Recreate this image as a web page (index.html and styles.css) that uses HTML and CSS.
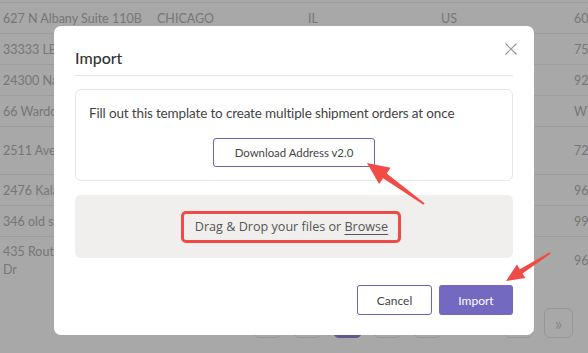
FILE: index.html
```html
<!DOCTYPE html>
<html lang="en">
<head>
  <meta charset="UTF-8" />
  <meta name="viewport" content="width=device-width, initial-scale=1.0" />
  <title>Import</title>
  <link rel="stylesheet" href="styles.css">
</head>
<body>
  <div class="table">
    <div class="row"><span>627 N Albany Suite 110B</span><span>CHICAGO</span><span>IL</span><span>US</span><span>60</span></div>
    <div class="row"><span>33333 LBJ Fwy</span><span>DALLAS</span><span>TX</span><span>US</span><span>75</span></div>
    <div class="row"><span>24300 Nandina Ave</span><span>MORENO VALLEY</span><span>CA</span><span>US</span><span>92</span></div>
    <div class="row"><span>66 Wardour Street</span><span>LONDON</span><span>LND</span><span>GB</span><span>WT</span></div>
    <div class="row tall"><span>2511 Avenida</span><span>FORT WORTH</span><span>TX</span><span>US</span><span>72</span></div>
    <div class="row"><span>2476 Kalama Rd</span><span>KENT</span><span>WA</span><span>US</span><span>96</span></div>
    <div class="row"><span>346 old street</span><span>RENO</span><span>NV</span><span>US</span><span>99</span></div>
    <div class="row tall"><span>435 Route 17 Lake<br>Dr</span><span>HONOLULU</span><span>HI</span><span>US</span><span>96</span></div>
    <div class="pager">
      <span class="pg"></span><span class="pg"></span><span class="pg active"></span><span class="pg"></span><span class="pg"></span>
      <span class="pg gap"></span><span class="pg"></span><span class="pg">&raquo;</span>
    </div>
  </div>

  <div class="overlay">
    <div class="modal">
      <div class="modal-head">
        <h2>Import</h2>
        <button class="close" aria-label="Close">
          <svg width="12" height="12" viewBox="0 0 12 12"><path d="M0.5 0.5 L11.5 11.5 M11.5 0.5 L0.5 11.5" stroke="#9a9a9a" stroke-width="1.2" fill="none"/></svg>
        </button>
      </div>

      <div class="template">
        <p>Fill out this template to create multiple shipment orders at once</p>
        <div class="center"><button class="btn-outline wide">Download Address v2.0</button></div>
      </div>

      <div class="drop">
        <span class="mark">Drag &amp; Drop your files or <u>Browse</u></span>
      </div>

      <div class="modal-foot">
        <button class="btn-outline">Cancel</button>
        <button class="btn-primary">Import</button>
      </div>
    </div>
  </div>

  <svg class="arrows" width="588" height="353" viewBox="0 0 588 353">
    <polygon fill="#f14b47" points="367,163 390.7,167.7 386.7,173.4 424.6,203.2 423.4,204.8 383.1,178.2 379.1,183.9"/>
    <polygon fill="#f14b47" points="506,281 525.5,278.1 522.5,273.4 550.5,253.8 549.5,252.2 519.9,269.2 516.9,264.5"/>
  </svg>
</body>
</html>
```
FILE: styles.css
```css
* {
  box-sizing: border-box;
}
body {
  margin: 0;
  font-family: Lato, 'Noto Sans', sans-serif;
  background-color: #ffffff;
  overflow: hidden;
}
.table {
  padding-top: 2px;
}
.row {
  display: grid;
  grid-template-columns: 154px 151px 133px 133px 1fr;
  align-items: center;
  height: 31px;
  padding-left: 3px;
  border-top: 1px solid #eeeeee;
  font-size: 12.5px;
  color: #b4b4b4;
}
.row span {
  overflow: hidden;
  white-space: nowrap;
}
.row.tall {
  height: 48px;
  line-height: 18px;
}
.row:last-of-type {
  border-bottom: 1px solid #eeeeee;
}
.pager {
  display: flex;
  gap: 11px;
  padding: 24px 0 0 253px;
}
.pg {
  width: 29px;
  height: 30px;
  border: 1px solid #e6e6e6;
  border-radius: 6px;
  color: #cfcfcf;
  font-size: 18px;
  display: flex;
  align-items: center;
  justify-content: center;
}
.pg.active {
  background-color: #8f89d0;
  border-color: #8f89d0;
}
.pg.gap {
  border: none;
  width: 40px;
}
.overlay {
  position: fixed;
  inset: 0;
  background-color: rgba(0, 0, 0, 0.34);
  display: flex;
  justify-content: center;
  align-items: flex-start;
  padding-top: 26px;
}
.modal {
  position: relative;
  width: 480px;
  background-color: #ffffff;
  border-radius: 7px;
  padding: 0 21px 20px;
}
.modal-head {
  padding: 21px 0 6px;
  border-bottom: 1px solid #e4e4e4;
}
.modal-head h2 {
  margin: 0;
  font-size: 16px;
  line-height: 22px;
  font-weight: 500;
  color: #333333;
}
.close {
  position: absolute;
  top: 17px;
  right: 17px;
  padding: 0;
  border: none;
  background: none;
  width: 12px;
  height: 12px;
  display: block;
}
.close svg {
  display: block;
}
.template {
  margin-top: 13px;
  border: 1px solid #e6e6e6;
  border-radius: 6px;
  padding: 13px 13px 13px;
}
.template p {
  margin: 0 0 15px;
  font-size: 13.5px;
  letter-spacing: -0.15px;
  line-height: 20px;
  color: #444444;
}
.center {
  display: flex;
  justify-content: center;
}
.btn-outline {
  height: 30px;
  width: 75px;
  border: 1px solid #6c64b6;
  border-radius: 3px;
  background-color: #ffffff;
  font-family: Lato, sans-serif;
  font-size: 12px;
  color: #444444;
  padding: 0;
}
.btn-outline.wide {
  width: 162px;
  height: 29px;
  font-size: 11.4px;
}
.btn-primary {
  height: 30px;
  width: 74px;
  border: none;
  border-radius: 3px;
  background-color: #7469c1;
  font-family: Lato, sans-serif;
  font-size: 12px;
  color: #ffffff;
  padding: 0;
}
.drop {
  margin-top: 14px;
  height: 63px;
  border-radius: 6px;
  background-color: #f0efee;
  display: flex;
  align-items: center;
  justify-content: center;
}
.mark {
  display: inline-block;
  font-family: 'Open Sans', sans-serif;
  font-size: 12.6px;
  line-height: 26px;
  color: #555555;
  padding: 0 10px 0 11px;
  border: 3px solid #f04a47;
  border-radius: 5px;
  margin-right: 6px;
}
.mark u {
  text-underline-offset: 3px;
}
.modal-foot {
  margin-top: 27px;
  display: flex;
  justify-content: flex-end;
  gap: 7px;
}
.arrows {
  position: fixed;
  top: 0;
  left: 0;
  pointer-events: none;
}
```
